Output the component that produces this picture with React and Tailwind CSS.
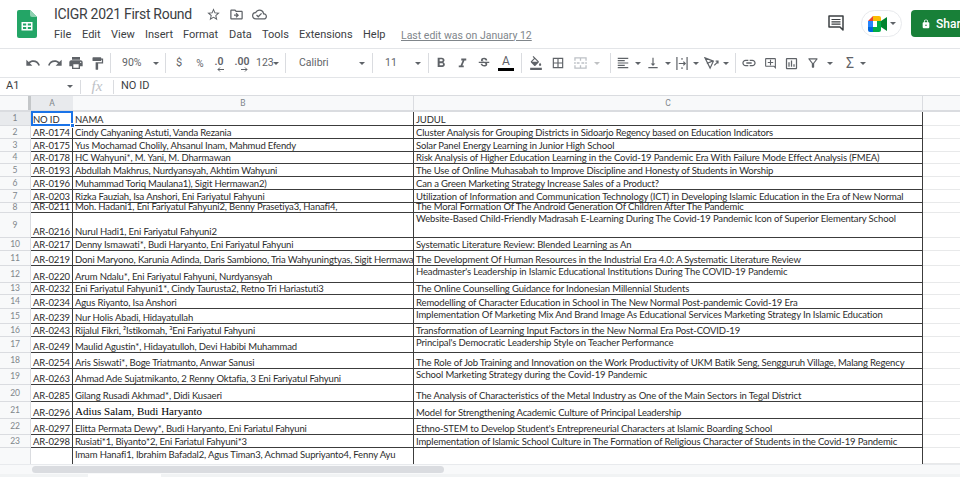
import {
  MdUndo, MdRedo, MdPrint, MdFormatPaint, MdFormatBold, MdFormatItalic, MdStrikethroughS,
  MdFormatColorFill, MdBorderAll, MdFormatAlignLeft, MdVerticalAlignBottom, MdLink,
  MdOutlineAddComment, MdOutlineInsertChart, MdOutlineFilterAlt, MdStarBorder,
  MdOutlineDriveFileMove, MdOutlineCloudDone, MdLock,
} from "react-icons/md";

const menu = [
  ["File", "w-[28px]"], ["Edit", "w-[29px]"], ["View", "w-[34px]"], ["Insert", "w-[38px]"],
  ["Format", "w-[46px]"], ["Data", "w-[33px]"], ["Tools", "w-[37px]"], ["Extensions", "w-[64px]"], ["Help", "w-[38px]"],
];

const rows = [
  { h: "h-[14px]", id: "NO ID", nama: "NAMA", judul: "JUDUL" },
  { h: "h-[13px]", id: "AR-0174", nama: "Cindy Cahyaning Astuti, Vanda Rezania", judul: "Cluster Analysis for Grouping Districts in Sidoarjo Regency based on Education Indicators" },
  { h: "h-[13px]", id: "AR-0175", nama: "Yus Mochamad Cholily, Ahsanul Inam, Mahmud Efendy", judul: "Solar Panel Energy Learning in Junior High School" },
  { h: "h-[12px]", id: "AR-0178", nama: "HC Wahyuni*, M. Yani, M. Dharmawan", judul: "Risk Analysis of Higher Education Learning in the Covid-19 Pandemic Era With Failure Mode Effect Analysis (FMEA)" },
  { h: "h-[13px]", id: "AR-0193", nama: "Abdullah Makhrus, Nurdyansyah, Akhtim Wahyuni", judul: "The Use of Online Muhasabah to Improve Discipline and Honesty of Students in Worship" },
  { h: "h-[13px]", id: "AR-0196", nama: "Muhammad Toriq Maulana1), Sigit Hermawan2)", judul: "Can a Green Marketing Strategy Increase Sales of a Product?" },
  { h: "h-[13px]", id: "AR-0203", nama: "Rizka Fauziah, Isa Anshori, Eni Fariyatul Fahyuni", judul: "Utilization of Information and Communication Technology (ICT) in Developing Islamic Education in the Era of New Normal" },
  { h: "h-[10px]", id: "AR-0211", nama: "Moh. Hadani1,  Eni Fariyatul Fahyuni2, Benny Prasetiya3, Hanafi4,", judul: "The Moral Formation Of The Android Generation Of Children After The Pandemic" },
  { h: "h-[25px]", id: "AR-0216", nama: "Nurul Hadi1, Eni Fariyatul Fahyuni2", judul: "Website-Based Child-Friendly Madrasah E-Learning During The Covid-19 Pandemic Icon of Superior Elementary School", top: true },
  { h: "h-[13px]", id: "AR-0217", nama: "Denny Ismawati*, Budi Haryanto, Eni Fariyatul Fahyuni", judul: "Systematic Literature Review: Blended Learning as An" },
  { h: "h-[15px]", id: "AR-0219", nama: "Doni Maryono, Karunia Adinda, Daris Sambiono, Tria Wahyuningtyas, Sigit Hermawan", judul: "The Development Of Human Resources in the Industrial Era 4.0: A Systematic Literature Review" },
  { h: "h-[17px]", id: "AR-0220", nama: "Arum Ndalu*, Eni Fariyatul Fahyuni, Nurdyansyah", judul: "Headmaster's Leadership in Islamic Educational Institutions During The COVID-19 Pandemic", top: true },
  { h: "h-[12px]", id: "AR-0232", nama: "Eni Fariyatul Fahyuni1*, Cindy Taurusta2, Retno Tri Hariastuti3", judul: "The Online Counselling Guidance for Indonesian Millennial Students" },
  { h: "h-[14px]", id: "AR-0234", nama: "Agus Riyanto, Isa Anshori", judul: "Remodelling of Character Education in School in The New Normal Post-pandemic Covid-19 Era" },
  { h: "h-[15px]", id: "AR-0239", nama: "Nur Holis Abadi, Hidayatullah", judul: "Implementation Of Marketing Mix And Brand Image As Educational Services Marketing Strategy In Islamic Education", top: true },
  { h: "h-[13px]", id: "AR-0243", nama: "Rijalul Fikri, ²Istikomah, ³Eni Fariyatul Fahyuni", judul: "Transformation of Learning Input Factors in the New Normal Era Post-COVID-19" },
  { h: "h-[16px]", id: "AR-0249", nama: "Maulid Agustin*, Hidayatulloh, Devi Habibi Muhammad", judul: "Principal's Democratic Leadership Style on Teacher Performance", top: true },
  { h: "h-[16px]", id: "AR-0254", nama: "Aris Siswati*, Boge Triatmanto, Anwar Sanusi", judul: "The Role of Job Training and Innovation on the Work Productivity of UKM Batik Seng, Sengguruh Village, Malang Regency" },
  { h: "h-[16px]", id: "AR-0263", nama: "Ahmad Ade Sujatmikanto, 2 Renny Oktafia, 3 Eni Fariyatul Fahyuni", judul: "School Marketing Strategy during the Covid-19 Pandemic", top: true },
  { h: "h-[17px]", id: "AR-0285", nama: "Gilang Rusadi Akhmad*, Didi Kusaeri", judul: "The Analysis of Characteristics of the Metal Industry as One of the Main Sectors in Tegal District" },
  { h: "h-[17px]", id: "AR-0296", nama: "Adius Salam, Budi Haryanto", judul: "Model for Strengthening Academic Culture of Principal Leadership", serif: true },
  { h: "h-[16px]", id: "AR-0297", nama: "Elitta Permata Dewy*, Budi Haryanto, Eni Fariatul Fahyuni", judul: "Ethno-STEM to Develop Student's Entrepreneurial Characters at Islamic Boarding School" },
  { h: "h-[13px]", id: "AR-0298", nama: "Rusiati*1, Biyanto*2, Eni Fariatul Fahyuni*3", judul: "Implementation of Islamic School Culture in The Formation of Religious Character of Students in the Covid-19 Pandemic" },
  { h: "h-[16px]", id: "", nama: "Imam Hanafi1, Ibrahim Bafadal2, Agus Timan3, Achmad Supriyanto4, Fenny Ayu", judul: "", top: true, last: true },
];

function Caret({ className = "" }) {
  return <span className={`w-0 h-0 shrink-0 border-x-[3px] border-x-transparent border-t-[3px] border-t-[#5f6368] ${className}`} />;
}

function Sep() {
  return <span className="w-px h-[20px] bg-[#dadce0] shrink-0" />;
}

function Tool({ w, children }) {
  return <span className={`flex items-center justify-center shrink-0 text-[#5f6368] ${w}`}>{children}</span>;
}

function SheetsLogo() {
  return (
    <svg width="20" height="28" viewBox="0 0 20 28">
      <path d="M2 0h11l7 7v19a2 2 0 0 1-2 2H2a2 2 0 0 1-2-2V2a2 2 0 0 1 2-2z" fill="#23a566" />
      <path d="M13 0l7 7h-5a2 2 0 0 1-2-2z" fill="#8ed1b1" />
      <path d="M4.5 12h11v8.5h-11z M6 13.5v2h3.2v-2z M10.8 13.5v2H14v-2z M6 17v2h3.2v-2z M10.8 17v2H14v-2z" fill="#fff" fillRule="evenodd" />
    </svg>
  );
}

function MeetLogo() {
  return (
    <svg width="19" height="16" viewBox="0 0 19 16">
      <path d="M0 5l5-5v5z" fill="#ea4335" />
      <path d="M5 0h6a2 2 0 0 1 2 2v3H5z" fill="#fbbc04" />
      <path d="M0 5h5v6H0z" fill="#2684fc" />
      <path d="M0 11h5v5H2a2 2 0 0 1-2-2z" fill="#0066da" />
      <path d="M5 11h8v3a2 2 0 0 1-2 2H5z" fill="#00ac47" />
      <path d="M13 5l6-4v14l-6-4z" fill="#00832d" />
      <path d="M9 5h4v6H9z" fill="#00ac47" />
    </svg>
  );
}

function CommentIcon() {
  return (
    <svg width="16" height="16" viewBox="0 0 16 16" fill="none" stroke="#3c4043" strokeWidth="1.5" className="mt-[5px] mr-[17px]">
      <path d="M1 1h14v14l-3-3H1z" strokeLinejoin="round" />
      <path d="M3.5 4.5h9 M3.5 6.8h9 M3.5 9.1h9" strokeWidth="1.2" />
    </svg>
  );
}

function MergeIcon() {
  return (
    <svg width="13" height="12" viewBox="0 0 14 13" fill="none" stroke="#bdc1c6" strokeWidth="1.4">
      <path d="M1 4V1h12v3 M1 9v3h12V9 M1 5.5v2 M13 5.5v2 M7 1v3 M7 9v3 M3 6.5h3 M8 6.5h3" />
    </svg>
  );
}

function WrapIcon() {
  return (
    <svg width="12" height="13" viewBox="0 0 13 14" fill="none" stroke="#5f6368" strokeWidth="1.3">
      <path d="M1 0v14 M12 0v14 M3 7h7 M8 5l2 2-2 2 M6.5 1v2 M6.5 11v2" />
    </svg>
  );
}

function RotateIcon() {
  return (
    <svg width="15" height="13" viewBox="0 0 16 14" fill="none" stroke="#5f6368" strokeWidth="1.3">
      <path d="M1 1l9 3.5L6.5 12z M3 7l6-2.5 M11 9l4-4 M12.5 4.5H15v2.5" />
    </svg>
  );
}

function DecimalIcon({ label, flip }) {
  return (
    <span className="flex flex-col items-center font-semibold text-[10.5px] leading-[10px] pt-[3px]">
      {label}
      <svg width="7" height="5" viewBox="0 0 7 5" fill="none" stroke="#5f6368" strokeWidth="1" className={`${flip ? "rotate-180 ml-[5px]" : "ml-[3px]"}`}>
        <path d="M7 2.5H1 M3 .5l-2 2 2 2" />
      </svg>
    </span>
  );
}

function Toolbar() {
  return (
    <div className="h-[30px] flex items-center pl-[22px] border-y border-[#e3e5e8] text-[10.5px] text-[#5f6368] shrink-0">
      <Tool w="w-[22px]"><MdUndo size={16} /></Tool>
      <Tool w="w-[21px]"><MdRedo size={16} /></Tool>
      <Tool w="w-[21px]"><MdPrint size={16} /></Tool>
      <Tool w="w-[22px]"><MdFormatPaint size={15} /></Tool>
      <span className="w-[2px]" />
      <Sep />
      <span className="w-[11px]" />
      <span className="w-[31px]">90%</span>
      <Caret />
      <span className="w-[6px]" />
      <Sep />
      <Tool w="w-[26px]"><span className="text-[11px]">$</span></Tool>
      <Tool w="w-[16px]"><span className="text-[10px]">%</span></Tool>
      <Tool w="w-[22px]"><DecimalIcon label=".0" /></Tool>
      <Tool w="w-[24px]"><DecimalIcon label=".00" flip /></Tool>
      <span className="w-[19px] pl-[2px] whitespace-nowrap">123</span>
      <Caret />
      <span className="w-[6px]" />
      <Sep />
      <span className="w-[13px]" />
      <span className="w-[60px]">Calibri</span>
      <Caret />
      <span className="w-[7px]" />
      <Sep />
      <span className="w-[12px]" />
      <span className="w-[30px]">11</span>
      <Caret />
      <span className="w-[7px]" />
      <Sep />
      <Tool w="w-[24px]"><MdFormatBold size={16} /></Tool>
      <Tool w="w-[18px]"><MdFormatItalic size={15} /></Tool>
      <Tool w="w-[25px]"><MdStrikethroughS size={14} /></Tool>
      <Tool w="w-[20px]">
        <span className="flex flex-col items-center leading-none">
          <span className="text-[12px] leading-[13px]">A</span>
          <span className="w-[16px] h-[3px] bg-black" />
        </span>
      </Tool>
      <span className="w-[5px]" />
      <Sep />
      <Tool w="w-[28px]"><MdFormatColorFill size={14} /></Tool>
      <Tool w="w-[16px]"><MdBorderAll size={14} /></Tool>
      <Tool w="w-[28px]"><MergeIcon /></Tool>
      <Caret className="opacity-40" />
      <span className="w-[10px]" />
      <Sep />
      <Tool w="w-[24px]"><MdFormatAlignLeft size={14} /></Tool>
      <Caret />
      <Tool w="w-[24px]"><MdVerticalAlignBottom size={14} /></Tool>
      <Caret />
      <Tool w="w-[22px]"><WrapIcon /></Tool>
      <Caret />
      <Tool w="w-[24px]"><RotateIcon /></Tool>
      <Caret />
      <span className="w-[6px]" />
      <Sep />
      <Tool w="w-[26px]"><MdLink size={16} /></Tool>
      <Tool w="w-[16px]"><MdOutlineAddComment size={13} /></Tool>
      <Tool w="w-[26px]"><MdOutlineInsertChart size={15} /></Tool>
      <Tool w="w-[18px]"><MdOutlineFilterAlt size={14} /></Tool>
      <Caret className="ml-[5px]" />
      <span className="w-[7px]" />
      <Tool w="w-[20px]"><span className="text-[14px] leading-none">Σ</span></Tool>
      <Caret />
    </div>
  );
}

function Row({ row, num }) {
  const lines = row.last ? "" : "border-b border-[#3c3c3c]";
  const judulAlign = row.top ? "items-start" : "items-end";
  return (
    <div className={`flex shrink-0 ${row.h}`}>
      <div className={`w-[31px] shrink-0 border-r border-[#dadce0] flex items-center justify-center text-[8.5px] text-[#80868b] ${num === 1 ? "bg-[#e8eaed]" : "bg-[#f8f9fa]"} ${row.last ? "" : "border-b"}`}>
        {row.last ? "" : num}
      </div>
      <div className={`w-[42px] shrink-0 flex items-end pl-[2px] border-r border-[#3c3c3c] overflow-hidden whitespace-nowrap ${lines}`}>
        <span className="leading-[11px]">{row.id}</span>
      </div>
      <div className={`w-[341px] shrink-0 flex pl-[2px] border-r border-[#3c3c3c] overflow-hidden whitespace-nowrap ${row.last ? "items-start pt-[1px]" : "items-end"} ${lines}`}>
        <span className={row.serif ? "font-['Liberation_Serif',serif] text-[11px] leading-[14px] font-normal tracking-normal text-black" : "leading-[11px]"}>{row.nama}</span>
      </div>
      <div className={`w-[509px] shrink-0 flex pl-[2px] border-r border-[#3c3c3c] overflow-hidden whitespace-nowrap ${judulAlign} ${lines}`}>
        <span className="leading-[11px]">{row.judul}</span>
      </div>
      <div className="flex-1 border-b border-[#e8e9ea]" />
    </div>
  );
}

export default function App() {
  return (
    <div className="w-[960px] h-[477px] overflow-hidden bg-white flex flex-col font-['Roboto',sans-serif]">
      {/* title bar */}
      <div className="h-[48px] shrink-0 flex">
        <div className="w-[54px] shrink-0 pl-[17px] pt-[10px]"><SheetsLogo /></div>
        <div className="flex-1">
          <div className="h-[28px] flex items-center gap-[8px] text-[#5f6368]">
            <span className="text-[14px] tracking-[-0.3px] text-[#3c4043] w-[144px] whitespace-nowrap">ICIGR 2021 First Round</span>
            <MdStarBorder size={15} />
            <MdOutlineDriveFileMove size={15} />
            <MdOutlineCloudDone size={15} />
          </div>
          <div className="flex items-center text-[11px] text-[#3c4043] h-[15px]">
            {menu.map(([label, w]) => <span key={label} className={w}>{label}</span>)}
            <span className="underline text-[10.5px] text-[#80868b]">Last edit was on January 12</span>
          </div>
        </div>
        <div className="flex items-start pt-[10px] shrink-0">
          <CommentIcon />
          <div className="w-[41px] h-[27px] rounded-full border border-[#e8eaed] flex items-center justify-center gap-[3px] mr-[9px]">
            <MeetLogo />
            <Caret className="border-t-[#1a73e8]" />
          </div>
          <div className="w-[49px] h-[27px] bg-[#188038] rounded-l-[4px] flex items-center pl-[10px] gap-[5px] text-white text-[12px] font-medium whitespace-nowrap overflow-hidden">
            <MdLock size={10} className="shrink-0" />
            <span>Share</span>
          </div>
        </div>
      </div>

      <Toolbar />

      {/* formula bar */}
      <div className="h-[18px] shrink-0 flex items-center border-b border-[#dadce0] text-[11px] text-[#3c4043]">
        <span className="w-[67px] pl-[6px]">A1</span>
        <Caret />
        <span className="w-[5px]" />
        <span className="w-px h-[14px] bg-[#dadce0] ml-[2px]" />
        <span className="w-[32px] text-center font-['Liberation_Serif',serif] italic text-[15px] text-[#bdc1c6]">fx</span>
        <span className="w-px h-[14px] bg-[#dadce0]" />
        <span className="pl-[7px]">NO ID</span>
      </div>

      {/* column letters */}
      <div className="h-[16px] shrink-0 flex bg-[#f8f9fa] border-b-2 border-[#dadce0] text-[8.5px] text-[#80868b]">
        <div className="w-[31px] shrink-0 bg-[#f8f9fa] border-r-[3px] border-[#c4c7c9]" />
        <div className="w-[42px] shrink-0 bg-[#e8eaed] flex items-center justify-center">A</div>
        <div className="w-[341px] shrink-0 flex items-center justify-center border-r border-[#dadce0]">B</div>
        <div className="w-[509px] shrink-0 flex items-center justify-center border-r border-[#dadce0]">C</div>
        <div className="flex-1" />
      </div>

      {/* sheet rows */}
      <div className="relative flex flex-col shrink-0 text-[9.5px] tracking-[-0.14px] text-[#2c2c2c] font-['Lato',sans-serif]">
        {rows.map((row, i) => <Row key={i} row={row} num={i + 1} />)}
        <div className="absolute left-[31px] top-[-1px] w-[42px] h-[15px] border-2 border-[#1a73e8]" />
        <div className="absolute left-[70px] top-[11px] w-[5px] h-[5px] bg-[#1a73e8] border border-white" />
      </div>

      {/* horizontal scrollbar */}
      <div className="h-[10px] shrink-0 flex items-center bg-[#f8f9fa] border-t border-[#e8eaed]">
        <div className="w-[32px] shrink-0" />
        <div className="w-[412px] h-[7px] rounded-full bg-[#dadce0]" />
      </div>

      {/* sheet tabs */}
      <div className="flex-1 flex bg-[#f1f3f4]">
        <div className="w-[88px] shrink-0" />
        <div className="w-[73px] bg-white" />
      </div>
    </div>
  );
}
